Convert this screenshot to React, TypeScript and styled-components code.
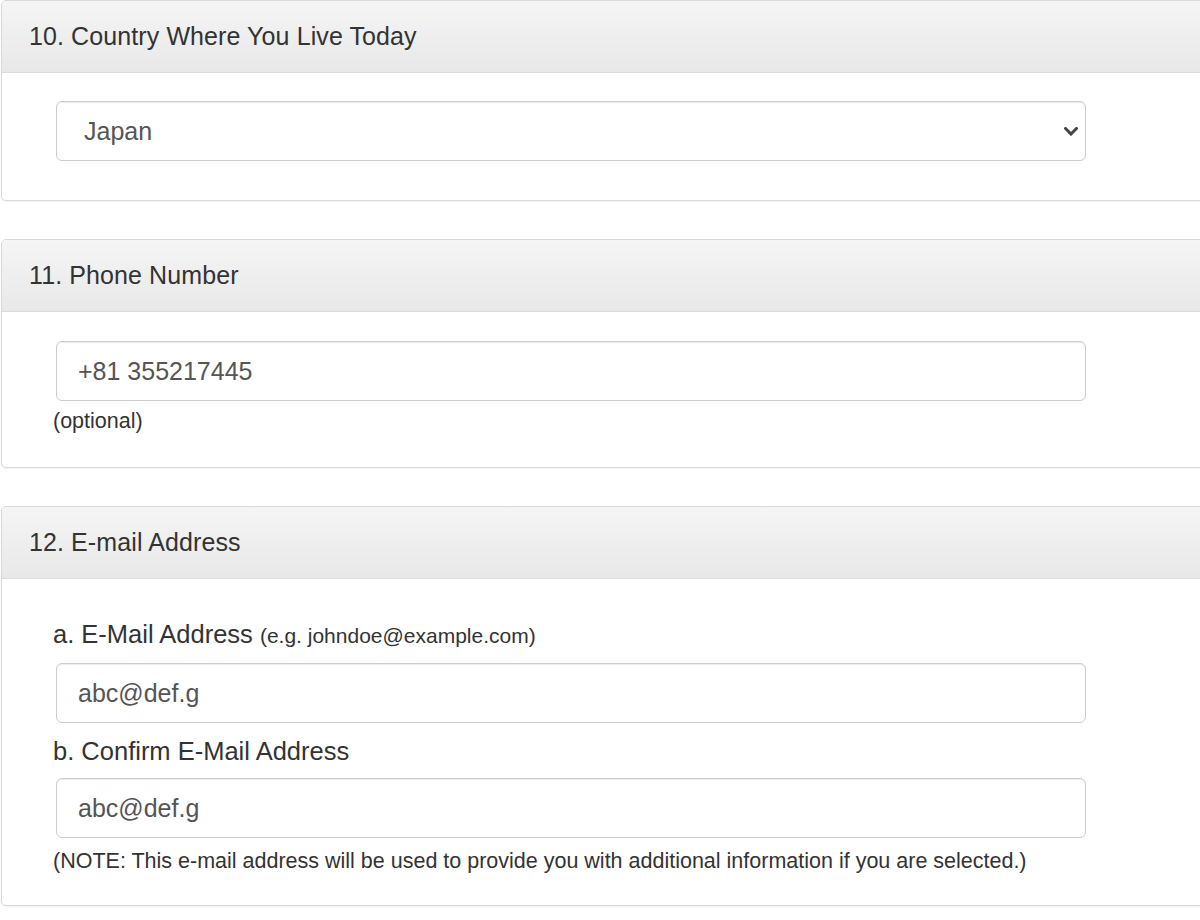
import React from "react";
import styled, { createGlobalStyle } from "styled-components";

const GlobalStyle = createGlobalStyle`
  html, body {
    margin: 0;
    padding: 0;
    background: #ffffff;
  }
  body {
    font-family: "Liberation Sans", Helvetica, Arial, sans-serif;
    color: #333333;
  }
  * { box-sizing: border-box; }
`;

const Page = styled.div`
  width: 1200px;
  height: 920px;
  overflow: hidden;
  padding-left: 1px;
`;

const Panel = styled.section`
  width: 1240px;
  background: #ffffff;
  border: 1px solid #d9d9d9;
  border-radius: 5px;
  box-shadow: 0 1px 2px rgba(0, 0, 0, 0.06);
  margin-bottom: 38px;
  overflow: hidden;
`;

const PanelHeading = styled.div`
  height: 72px;
  display: flex;
  align-items: center;
  padding: 0 27px;
  background: linear-gradient(to bottom, #f5f5f5 0%, #e8e8e8 100%);
  border-bottom: 1px solid #dcdcdc;
`;

const PanelTitle = styled.h3`
  margin: 0;
  font-size: 25px;
  font-weight: normal;
  color: #333333;
  letter-spacing: 0.1px;
`;

const PanelBody = styled.div<{ $top: number; $bottom: number }>`
  display: flex;
  flex-direction: column;
  align-items: flex-start;
  padding: ${(p) => p.$top}px 0 ${(p) => p.$bottom}px 51px;
`;

const fieldBase = `
  width: 1030px;
  height: 60px;
  margin-left: 3px;
  border: 1.5px solid #cccccc;
  border-radius: 6px;
  background: #ffffff;
  box-shadow: inset 0 1px 1px rgba(0, 0, 0, 0.075);
  font-family: "Liberation Sans", Helvetica, Arial, sans-serif;
  font-size: 25px;
  color: #555555;
  outline: none;
`;

const TextInput = styled.input`
  ${fieldBase}
  padding: 0 21px;
`;

const SelectWrap = styled.div`
  position: relative;
  width: 1030px;
  margin-left: 3px;
`;

const Select = styled.select`
  ${fieldBase}
  margin-left: 0;
  appearance: none;
  -webkit-appearance: none;
  padding: 0 50px 0 27px;
`;

const Chevron = styled.svg`
  position: absolute;
  right: 8px;
  top: 26px;
  width: 14px;
  height: 9px;
  pointer-events: none;
`;

const Help = styled.div<{ $mt: number }>`
  margin-top: ${(p) => p.$mt}px;
  font-size: 21.5px;
  line-height: 30px;
  color: #333333;
`;

const Label = styled.label<{ $mt: number }>`
  display: block;
  margin-top: ${(p) => p.$mt}px;
  margin-bottom: 10px;
  font-size: 25.5px;
  line-height: 34px;
  color: #333333;
`;

const LabelHint = styled.span`
  font-size: 21px;
`;

export default function App() {
  return (
    <>
      <GlobalStyle />
      <Page>
        <Panel>
          <PanelHeading>
            <PanelTitle>10. Country Where You Live Today</PanelTitle>
          </PanelHeading>
          <PanelBody $top={28} $bottom={39}>
            <SelectWrap>
              <Select defaultValue="Japan">
                <option value="Japan">Japan</option>
              </Select>
              <Chevron viewBox="0 0 14 9">
                <path
                  d="M1.5 1.5 L7 7 L12.5 1.5"
                  fill="none"
                  stroke="#444444"
                  strokeWidth="3"
                  strokeLinecap="square"
                />
              </Chevron>
            </SelectWrap>
          </PanelBody>
        </Panel>

        <Panel>
          <PanelHeading>
            <PanelTitle>11. Phone Number</PanelTitle>
          </PanelHeading>
          <PanelBody $top={29} $bottom={31}>
            <TextInput type="text" value="+81 355217445" readOnly />
            <Help $mt={5}>(optional)</Help>
          </PanelBody>
        </Panel>

        <Panel>
          <PanelHeading>
            <PanelTitle>12. E-mail Address</PanelTitle>
          </PanelHeading>
          <PanelBody $top={38} $bottom={29}>
            <Label $mt={0}>
              a. E-Mail Address <LabelHint>(e.g. johndoe@example.com)</LabelHint>
            </Label>
            <TextInput type="text" value="abc@def.g" readOnly />
            <Label $mt={11}>b. Confirm E-Mail Address</Label>
            <TextInput type="text" value="abc@def.g" readOnly />
            <Help $mt={8}>
              (NOTE: This e-mail address will be used to provide you with additional information if you are selected.)
            </Help>
          </PanelBody>
        </Panel>
      </Page>
    </>
  );
}
